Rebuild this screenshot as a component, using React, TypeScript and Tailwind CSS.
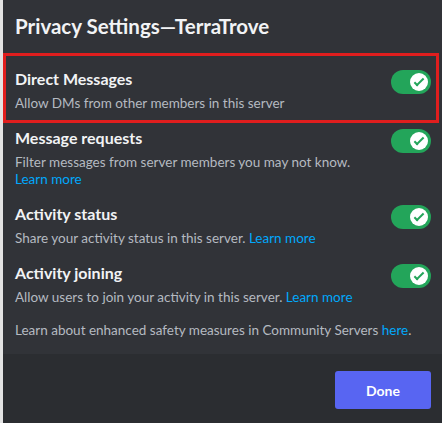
import React from "react";

function Toggle() {
  return (
    <div className="mt-px flex h-6 w-10 shrink-0 items-center justify-end rounded-full bg-[#23a55a] pr-[3px]">
      <div className="flex h-[18px] w-[18px] items-center justify-center rounded-full bg-white">
        <svg viewBox="0 0 20 20" className="h-[18px] w-[18px]">
          <path fill="#23a55a" d="M7.89561 14.8538L6.30462 13.2629L14.3099 5.25755L15.9009 6.84854L7.89561 14.8538Z" />
          <path fill="#23a55a" d="M4.08643 11.0903L5.67742 9.49929L9.4485 13.2704L7.85751 14.8614L4.08643 11.0903Z" />
        </svg>
      </div>
    </div>
  );
}

function Link({ children }: { children: React.ReactNode }) {
  return <span className="text-[#00a8fc]">{children}</span>;
}

function Row(props: { title: string; children: React.ReactNode }) {
  return (
    <div className="flex justify-between">
      <div>
        <div className="text-[16px] font-bold leading-5 text-[#f2f3f5]">{props.title}</div>
        <div className="mt-[6px] text-[13.5px] leading-[17px] text-[#b5bac1]">{props.children}</div>
      </div>
      <Toggle />
    </div>
  );
}

export default function App() {
  return (
    <div className="flex h-[423px] w-[442px] bg-[#e3e3e3] font-['Lato',sans-serif]">
      <div className="ml-[3px] flex flex-1 flex-col bg-[#313338]">
        <div className="flex flex-col pl-3 pr-[11px]">
          <h1 className="pt-[14px] text-[20.5px] font-bold leading-6 text-[#f2f3f5]">Privacy Settings—TerraTrove</h1>
          <div className="-ml-3 -mr-2 mt-[15px] border-[3px] border-[#e01e1e] pb-[8px] pl-[9px] pr-[5px] pt-[13px]">
            <Row title="Direct Messages">Allow DMs from other members in this server</Row>
          </div>
          <div className="mt-[5px] flex flex-col gap-4">
            <Row title="Message requests">
              Filter messages from server members you may not know.
              <br />
              <Link>Learn more</Link>
            </Row>
            <Row title="Activity status">
              Share your activity status in this server. <Link>Learn more</Link>
            </Row>
            <Row title="Activity joining">
              Allow users to join your activity in this server. <Link>Learn more</Link>
            </Row>
          </div>
          <p className="mt-[15px] pb-[15px] text-[13.5px] leading-[18px] text-[#b5bac1]">
            Learn about enhanced safety measures in Community Servers <Link>here</Link>.
          </p>
        </div>
        <div className="flex flex-1 justify-end bg-[#2b2d31] pr-[11px] pt-[17px]">
          <button className="h-[38px] w-24 rounded-[3px] bg-[#5865f2] text-[14px] font-bold text-white">Done</button>
        </div>
      </div>
    </div>
  );
}
